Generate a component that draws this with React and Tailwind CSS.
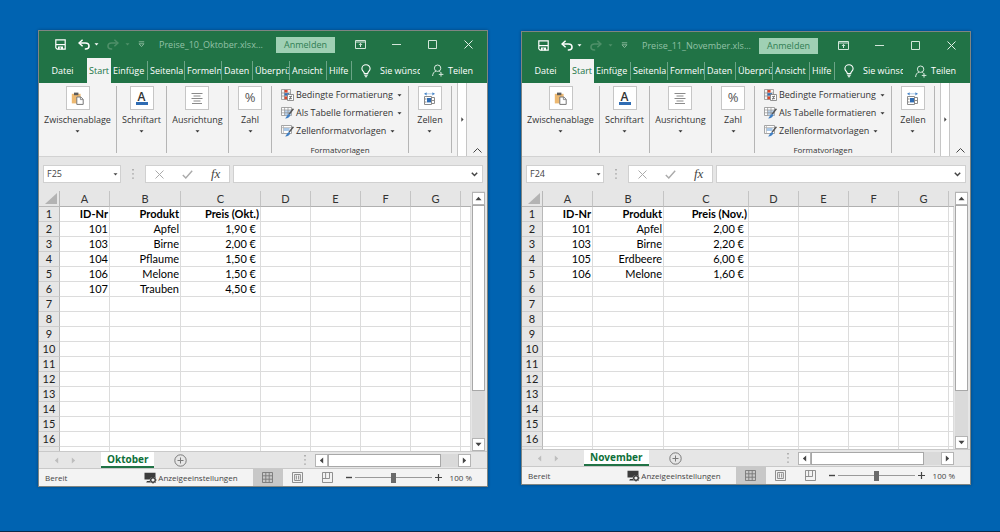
import React from 'react';

const workbooks = [
  {
    file: 'Preise_10_Oktober.xlsx...',
    sheet: 'Oktober',
    cell: 'F25',
    priceHead: 'Preis (Okt.)',
    priceCol: 'w-[80px]',
    peekRow: 'h-1',
    offset: '',
    tabHeight: 'h-[25px]',
    rows: [
      ['101', 'Apfel', '1,90 €'],
      ['103', 'Birne', '2,00 €'],
      ['104', 'Pflaume', '1,50 €'],
      ['106', 'Melone', '1,50 €'],
      ['107', 'Trauben', '4,50 €'],
    ],
  },
  {
    file: 'Preise_11_November.xls...',
    sheet: 'November',
    cell: 'F24',
    priceHead: 'Preis (Nov.)',
    priceCol: 'w-[85px]',
    peekRow: 'h-0.5',
    offset: 'mt-px',
    tabHeight: 'h-6',
    rows: [
      ['101', 'Apfel', '2,00 €'],
      ['103', 'Birne', '2,20 €'],
      ['105', 'Erdbeere', '6,00 €'],
      ['106', 'Melone', '1,60 €'],
    ],
  },
];

// the narrow ribbon only has room for the first letters of some tabs
const tabs = [
  { name: 'Einfügen', short: 'Einfüge', width: 'w-[37px]' },
  { name: 'Seitenlayout', short: 'Seitenla', width: 'w-[37px]' },
  { name: 'Formeln', short: 'Formeln', width: 'w-[37px]' },
  { name: 'Daten', short: 'Daten', width: 'w-[31px]' },
  { name: 'Überprüfen', short: 'Überprü', width: 'w-[37px]' },
  { name: 'Ansicht', short: 'Ansicht', width: 'w-[37px]' },
  { name: 'Hilfe', short: 'Hilfe', width: 'w-[25px]' },
];

const ROW_COUNT = 16;
const letters = ['A', 'B', 'C', 'D', 'E', 'F', 'G'];

/* ---------- Icons ---------- */

const Caret = ({ className = '' }) => (
  <svg className={className} width="5" height="3" viewBox="0 0 5 3">
    <path d="M0.5 0.2h4L2.5 2.6z" fill="currentColor" />
  </svg>
);

const Arrow = ({ turn = '' }) => (
  <svg className={turn} width="7" height="7" viewBox="0 0 7 7">
    <path d="M0.5 5.2h6L3.5 1.8z" fill="currentColor" />
  </svg>
);

const SaveIcon = () => (
  <svg width="11" height="11" viewBox="0 0 11 11" fill="none" stroke="#fff">
    <path d="M0.8 0.8h9.4v9.4H2.2L0.8 8.8z" strokeWidth="1.2" />
    <path d="M1 5.6h9" strokeWidth="1.2" />
    <path d="M3 7.6h5v2.6H6V8.6H4.6v1.6H3z" fill="#fff" stroke="none" />
  </svg>
);

const UndoIcon = ({ className = '' }) => (
  <svg className={className} width="12" height="11" viewBox="0 0 12 11" fill="none" stroke="currentColor">
    <path d="M4.6 0.8L1 4l3.6 3.2" strokeWidth="1.5" />
    <path d="M1.2 4h6.1c2.2 0 3.7 1.1 3.7 3 0 2-1.5 3-3.5 3H6.8" strokeWidth="1.6" />
  </svg>
);

const CustomizeIcon = () => (
  <svg width="7" height="7" viewBox="0 0 7 7" fill="none" stroke="#8dbb9f" strokeWidth="0.9">
    <path d="M0.8 0.8h5.4M1 2.8h5L3.5 5.6z" />
  </svg>
);

const RibbonModeIcon = () => (
  <svg width="11" height="9" viewBox="0 0 11 9" fill="none" stroke="#d3e6da">
    <path d="M0.5 0.5h10v8H0.5zM0.5 2h10" />
    <path d="M5.5 7V3.6M3.9 5l1.6-1.6L7.1 5" />
  </svg>
);

const BulbIcon = () => (
  <svg width="10" height="14" viewBox="0 0 10 14" fill="none" stroke="#fff">
    <path d="M3.3 9.6C3.3 7.8 0.9 7 0.9 4.7a4.1 4 0 0 1 8.2 0c0 2.3-2.4 3.1-2.4 4.9z" strokeWidth="1.1" />
    <path d="M3.3 11.2h3.4M3.9 12.8h2.2" strokeWidth="1.1" />
  </svg>
);

const ShareIcon = () => (
  <svg width="12" height="13" viewBox="0 0 12 13" fill="none" stroke="#d9eae0">
    <circle cx="5.6" cy="4.2" r="3.2" />
    <path d="M0.6 12c0.2-2.7 1.4-4.3 3.4-4.9M7.2 7l1.4 1.4M9 8.2v4.4M6.8 10.4h4.6" />
  </svg>
);

const PasteIcon = () => (
  <svg width="13" height="13" viewBox="0 0 13 13" fill="none">
    <path d="M0.8 1.8h8.8v9.6H0.8z" fill="#edb972" />
    <path d="M3 0.6h4.4v2.6H3z" fill="#5c5c5c" />
    <path d="M5.8 5h4l2.4 2.3v5.1H5.8z" fill="#fff" stroke="#777" />
    <path d="M9.4 5v2.6h2.8" stroke="#777" strokeWidth="0.8" />
  </svg>
);

const AlignIcon = () => (
  <svg width="12" height="13" viewBox="0 0 12 13" stroke="#8a8a8a">
    <path d="M0.5 1.5h11M2.5 4h7M0.5 6.5h11M2.5 9h7M1 11.5h10" />
  </svg>
);

const FontIcon = () => (
  <span className="flex flex-col items-center">
    <span className="text-[12px] leading-[11px] font-semibold text-[#333]">A</span>
    <span className="h-[3px] w-3 bg-[#2f6cb3]" />
  </span>
);

const CellsIcon = () => (
  <svg width="13" height="13" viewBox="0 0 13 13" fill="none">
    <path d="M1 1.8h11" stroke="#9dc0e6" strokeWidth="0.8" />
    <path d="M3.6 0.2v3.2L1.4 1.8zM9.4 0.2v3.2l2.2-1.6z" fill="#3f7fc4" />
    <path d="M1.5 4.5h7v8h-7zM8.5 5.5h3v6h-3z" stroke="#8b8b8b" />
    <path d="M1.5 7h2M1.5 10h2M9 8.5h3" stroke="#8b8b8b" />
    <path d="M4 6h4v4.4H4z" fill="#2f6cb3" />
  </svg>
);

const ConditionalIcon = () => (
  <svg width="13" height="12" viewBox="0 0 13 12" fill="none">
    <path d="M0.5 0.5h9v10h-9zM0.5 4h9M0.5 7h9M3.5 0.5v10" stroke="#8f8f8f" strokeWidth="0.8" />
    <path d="M3.6 1h3v2.6h-3zM3.6 7.4h2.4v2.8H3.6z" fill="#d9472b" />
    <path d="M3.6 4.2h4.4v2.4H3.6z" fill="#2f6cb3" />
    <path d="M6.5 5.5h6v6h-6z" fill="#fff" stroke="#777" strokeWidth="0.8" />
    <path d="M8 9.6h3M8 7.6h3M10.4 6.6l-1.8 4" stroke="#555" strokeWidth="0.7" />
  </svg>
);

const TableStyleIcon = ({ grid }) => (
  <svg width="13" height="12" viewBox="0 0 13 12" fill="none">
    <path d="M0.5 0.5h10v8h-10z" fill="#fff" stroke="#8f8f8f" strokeWidth="0.8" />
    {grid ? (
      <>
        <path d="M3.6 3.2h6.6v5H3.6z" fill="#b9d2ec" />
        <path d="M0.5 3h10M0.5 5.8h10M3.6 0.5v8M7 0.5v8" stroke="#8f8f8f" strokeWidth="0.7" />
      </>
    ) : (
      <>
        <path d="M2.6 3h6v3h-6z" fill="#a9c8e8" />
        <path d="M0.5 2.6h10M2.4 0.5v8" stroke="#a9a9a9" strokeWidth="0.7" />
      </>
    )}
    <path d="M12.4 1.8L8 7.4" stroke="#555" strokeWidth="1.5" />
    <path d="M8 7l1.2 1.2c-0.4 2-2 3.2-5.2 3.2 1.6-1 1.6-3.4 4-4.4z" fill="#3f7fc4" />
  </svg>
);

const DisplayIcon = () => (
  <svg width="13" height="12" viewBox="0 0 13 12">
    <path d="M0.5 0.8h11v4.4L7 5.4 5.4 7.6H0.5zM3 9h3v1.4H2.2z" fill="#3c3c3c" />
    <circle cx="9" cy="8" r="2.3" fill="none" stroke="#3c3c3c" strokeWidth="1.4" />
    <path d="M9 4.6v1M9 10.4v1.2M5.6 8h1M11.4 8h1.2M6.6 5.6l.8.8M10.6 9.6l.9.9M6.6 10.4l.8-.8M10.6 6.4l.9-.9" stroke="#3c3c3c" />
  </svg>
);

const NormalViewIcon = () => (
  <svg width="11" height="11" viewBox="0 0 11 11" fill="none" stroke="#777" strokeWidth="0.9">
    <path d="M0.5 0.5h10v10h-10zM0.5 3.8h10M0.5 7.2h10M3.8 0.5v10M7.2 0.5v10" />
  </svg>
);

const PageViewIcon = () => (
  <svg width="11" height="11" viewBox="0 0 11 11" fill="none" stroke="#858585" strokeWidth="0.9">
    <path d="M0.5 0.5h10v10h-10zM2.6 2.5h5.8v6H2.6z" />
    <path d="M4.4 3.5v4M6.6 3.5v4" />
  </svg>
);

const BreakViewIcon = () => (
  <svg width="11" height="11" viewBox="0 0 11 11" fill="none" stroke="#858585" strokeWidth="0.9">
    <path d="M0.5 0.5h10v10h-10zM0.5 6.5h7M3.6 0.5v6M7.5 0.5v6" />
  </svg>
);

const Dots = () => (
  <svg width="2" height="10" viewBox="0 0 2 10" fill="#999">
    <path d="M0.3 0h1.4v1.4H0.3zM0.3 4.2h1.4v1.4H0.3zM0.3 8.4h1.4v1.4H0.3z" />
  </svg>
);

/* ---------- Title bar and tabs ---------- */

const TitleBar = ({ file }) => (
  <header className="flex h-[27px] items-center bg-[#217346] pl-4 pr-[14px] text-white">
    <button aria-label="Speichern"><SaveIcon /></button>
    <button aria-label="Rückgängig" className="ml-3"><UndoIcon /></button>
    <Caret className="ml-1" />
    <button aria-label="Wiederholen" className="ml-2 text-[#4f9069]"><UndoIcon className="-scale-x-100" /></button>
    <Caret className="ml-1.5 text-[#4f9069]" />
    <button aria-label="Anpassen" className="ml-2"><CustomizeIcon /></button>
    <span className="ml-3.5 min-w-0 flex-1 overflow-hidden text-[9px] whitespace-nowrap text-[#93c2a6]">{file}</span>
    <button className="h-4 w-[59px] bg-[#9fd0b4] text-[9px] leading-4 text-[#2f7d53]">Anmelden</button>
    <button aria-label="Menüband-Anzeigeoptionen" className="ml-5"><RibbonModeIcon /></button>
    <button aria-label="Minimieren" className="ml-[26px]">
      <svg width="9" height="9" viewBox="0 0 9 9" stroke="#d3e6da"><path d="M0 4.5h9" /></svg>
    </button>
    <button aria-label="Maximieren" className="ml-[27px]">
      <svg width="9" height="9" viewBox="0 0 9 9" fill="none" stroke="#d3e6da"><path d="M0.5 0.5h8v8h-8z" /></svg>
    </button>
    <button aria-label="Schließen" className="ml-[27px]">
      <svg width="9" height="9" viewBox="0 0 9 9" stroke="#e3f0e8"><path d="M0.5 0.5l8 8M8.5 0.5l-8 8" /></svg>
    </button>
  </header>
);

const TabBar = ({ height }) => (
  <nav className={`${height} flex items-stretch bg-[#217346] text-[9px] whitespace-nowrap text-white`}>
    <button className="w-12 pr-px">Datei</button>
    <button className="w-6 bg-[#f3f3f3] text-[#217346]">Start</button>
    {tabs.map((tab) => (
      <button
        key={tab.name}
        aria-label={tab.name}
        className={`${tab.width} my-[3px] shrink-0 overflow-hidden border-r border-[#6ba486] px-[2px] text-left`}
      >
        {tab.short}
      </button>
    ))}
    <span className="ml-[9px] flex items-center"><BulbIcon /></span>
    <button aria-label="Sie wünschen" className="ml-[9px] w-10 overflow-hidden text-left">Sie wünsc</button>
    <button className="ml-3 flex items-center gap-1">
      <ShareIcon />
      Teilen
    </button>
  </nav>
);

/* ---------- Ribbon ---------- */

const RibbonGroup = ({ label, width, children }) => (
  <div className={`${width} flex shrink-0 justify-center border-r border-[#b5b5b5]`}>
    <button className="flex flex-col items-center">
      <span className="flex size-6 items-center justify-center border border-[#c6c6c6] bg-white">{children}</span>
      <span className="mt-1 leading-3 whitespace-nowrap">{label}</span>
      <Caret className="mt-1" />
    </button>
  </div>
);

const StyleButton = ({ icon, label }) => (
  <button className="flex h-[18px] shrink-0 items-center whitespace-nowrap">
    {icon}
    <span className="ml-0.5">{label}</span>
    <Caret className="ml-1" />
  </button>
);

const Ribbon = () => (
  <div className="flex h-[74px] border-b border-[#d2d2d2] bg-[#f3f3f3] text-[9px] text-[#333]">
    <div className="flex py-[3px]">
      <RibbonGroup label="Zwischenablage" width="w-[78px]"><PasteIcon /></RibbonGroup>
      <RibbonGroup label="Schriftart" width="w-[50px]"><FontIcon /></RibbonGroup>
      <RibbonGroup label="Ausrichtung" width="w-[62px]"><AlignIcon /></RibbonGroup>
      <RibbonGroup label="Zahl" width="w-[43px]"><span className="text-[13px] text-[#555]">%</span></RibbonGroup>
      <div className="flex w-[137px] shrink-0 flex-col items-start border-r border-[#b5b5b5] px-[9px]">
        <StyleButton icon={<ConditionalIcon />} label="Bedingte Formatierung" />
        <StyleButton icon={<TableStyleIcon grid />} label="Als Tabelle formatieren" />
        <StyleButton icon={<TableStyleIcon />} label="Zellenformatvorlagen" />
        <span className="mt-1 self-center text-[8px] leading-3">Formatvorlagen</span>
      </div>
      <RibbonGroup label="Zellen" width="w-[43px]"><CellsIcon /></RibbonGroup>
    </div>
    <button aria-label="Weitere Gruppen" className="ml-[5px] flex w-[10px] items-center justify-center border-x border-[#c6c6c6] bg-white">
      <svg width="3" height="5" viewBox="0 0 3 5"><path d="M0.3 0.3v4.4L2.6 2.5z" fill="#444" /></svg>
    </button>
    <button aria-label="Menüband reduzieren" className="flex flex-1 items-end justify-center pb-[3px]">
      <svg width="9" height="5" viewBox="0 0 9 5" fill="none" stroke="#444"><path d="M0.5 4.5l4-4 4 4" /></svg>
    </button>
  </div>
);

/* ---------- Formula bar ---------- */

const FormulaBar = ({ cell }) => (
  <div className="flex h-[34px] items-center bg-[#e6e6e6] px-1">
    <div className="flex h-[18px] w-[78px] items-center border border-[#d0d0d0] bg-white pr-0.5 text-[#444]">
      <input aria-label="Namenfeld" defaultValue={cell} className="min-w-0 flex-1 bg-transparent pl-[3px] text-[9px]" />
      <button aria-label="Namenliste"><Caret /></button>
    </div>
    <span className="ml-[11px]"><Dots /></span>
    <div className="ml-[11px] flex h-[18px] w-[85px] items-center border border-[#d0d0d0] bg-white">
      <button aria-label="Abbrechen" className="ml-[9px]">
        <svg width="9" height="9" viewBox="0 0 9 9" stroke="#aaa"><path d="M0.5 0.5l8 8M8.5 0.5l-8 8" /></svg>
      </button>
      <button aria-label="Eingeben" className="ml-[18px]">
        <svg width="11" height="9" viewBox="0 0 11 9" fill="none" stroke="#aaa" strokeWidth="1.4"><path d="M0.8 5l3 3L10.2 0.8" /></svg>
      </button>
      <button className="ml-[18px] font-['Liberation_Serif',serif] text-[13px] leading-4 text-[#444] italic">fx</button>
    </div>
    <div className="ml-[3px] flex h-[18px] min-w-0 flex-1 items-center border border-[#d0d0d0] bg-white pr-1">
      <input aria-label="Bearbeitungsleiste" className="min-w-0 flex-1 bg-transparent text-[9px]" />
      <button aria-label="Bearbeitungsleiste erweitern">
        <svg width="7" height="5" viewBox="0 0 7 5" fill="none" stroke="#444" strokeWidth="1.5"><path d="M0.8 0.8l2.7 2.7 2.7-2.7" /></svg>
      </button>
    </div>
  </div>
);

/* ---------- Sheet ---------- */

const Sheet = ({ book }) => {
  const { rows, priceHead, priceCol, peekRow } = book;
  const table = [['ID-Nr', 'Produkt', priceHead], ...rows];
  const grid = 'border-r border-b border-[#dcdcdc] p-0';

  return (
    <div className="flex bg-[#e6e6e6]">
      <table className="min-w-0 flex-1 table-fixed border-separate border-spacing-0 bg-white font-[Lato,sans-serif] text-[11px] leading-[14px] text-black">
        <colgroup>
          <col className="w-[21px]" />
          <col className="w-[50px]" />
          <col className="w-[71px]" />
          <col className={priceCol} />
          <col className="w-[50px]" />
          <col className="w-[50px]" />
          <col className="w-[50px]" />
          <col className="w-[50px]" />
          <col />
        </colgroup>
        <thead>
          <tr className="h-4 bg-[#e6e6e6] text-[#333]">
            <th className="border-r border-b border-[#b8b8b8] p-0">
              <svg className="ml-1.5" width="12" height="11" viewBox="0 0 12 11"><path d="M12 0v11H0z" fill="#b3b3b3" /></svg>
            </th>
            {letters.map((letter) => (
              <th key={letter} className="border-r border-b border-r-[#c4c4c4] border-b-[#b0b0b0] p-0 font-normal">{letter}</th>
            ))}
            <th className="border-b border-[#b0b0b0] p-0" />
          </tr>
        </thead>
        <tbody>
          {Array.from({ length: ROW_COUNT }, (_, r) => (
            <tr key={r} className="h-[15px]">
              <th className="border-r border-b border-r-[#b8b8b8] border-b-[#cdcdcd] bg-[#e6e6e6] p-0 font-normal text-[#222]">{r + 1}</th>
              {letters.map((letter, c) => (
                <td
                  key={letter}
                  className={`${grid} text-right whitespace-nowrap ${r === 0 ? 'font-bold' : ''} ${c === 2 && r > 0 ? 'pr-1' : 'pr-px'}`}
                >
                  {table[r]?.[c]}
                </td>
              ))}
              <td className={grid} />
            </tr>
          ))}
          <tr className={peekRow}>
            <th className="border-r border-[#b8b8b8] bg-[#e6e6e6] p-0" />
            {letters.map((letter) => (
              <td key={letter} className="border-r border-[#dcdcdc] p-0" />
            ))}
            <td className="border-r border-[#dcdcdc] p-0" />
          </tr>
        </tbody>
      </table>

      {/* vertical scroll bar */}
      <div className="ml-px mr-0.5 flex w-[13px] flex-col bg-[#dadada] text-[#444]">
        <button aria-label="Nach oben" className="mt-px flex h-[13px] items-center justify-center border border-[#b4b4b4] bg-white"><Arrow /></button>
        <div className="h-[186px] border border-[#a8a8a8] bg-white" />
        <div className="flex-1" />
        <button aria-label="Nach unten" className="flex h-[13px] items-center justify-center border border-[#b4b4b4] bg-white"><Arrow turn="rotate-180" /></button>
      </div>
    </div>
  );
};

const SheetTabs = ({ sheet }) => (
  <div className="flex h-[18px] border-y border-[#c9c9c9] bg-[#e6e6e6] pr-4 text-[#444]">
    <div className="flex w-[62px] items-center gap-[10px] pl-[14px] text-[#bdbdbd]">
      <button aria-label="Vorheriges Blatt"><Arrow turn="-rotate-90" /></button>
      <button aria-label="Nächstes Blatt"><Arrow turn="rotate-90" /></button>
    </div>
    <button className="border-b-2 border-[#217346] bg-white px-1.5 text-[10px] leading-[14px] font-bold text-[#0e7039]">{sheet}</button>
    <button aria-label="Neues Blatt" className="ml-5">
      <svg width="13" height="13" viewBox="0 0 13 13" fill="none" stroke="#7a7a7a">
        <circle cx="6.5" cy="6.5" r="5.7" />
        <path d="M6.5 3.5v6M3.5 6.5h6" />
      </svg>
    </button>
    <div className="ml-auto flex items-center">
      <Dots />
      <button aria-label="Nach links" className="ml-[9px] flex size-[13px] items-center justify-center border border-[#b4b4b4] bg-white"><Arrow turn="-rotate-90" /></button>
      <div className="flex h-[13px] w-[130px] bg-[#dadada]">
        <div className="w-[113px] border border-[#a8a8a8] bg-white" />
      </div>
      <button aria-label="Nach rechts" className="flex size-[13px] items-center justify-center border border-[#b4b4b4] bg-white"><Arrow turn="rotate-90" /></button>
    </div>
  </div>
);

const StatusBar = () => (
  <footer className="flex h-[17px] items-center bg-[#f3f3f3] pr-[15px] pl-1.5 text-[8px] whitespace-nowrap text-[#444]">
    <span>Bereit</span>
    <button className="mr-[15px] ml-auto flex items-center gap-px">
      <DisplayIcon />
      Anzeigeeinstellungen
    </button>
    <button aria-label="Normal" className="flex h-full w-[30px] items-center justify-center bg-[#c8c8c8]"><NormalViewIcon /></button>
    <button aria-label="Seitenlayout" className="flex h-full w-[30px] items-center justify-center"><PageViewIcon /></button>
    <button aria-label="Umbruchvorschau" className="flex h-full w-[30px] items-center justify-center"><BreakViewIcon /></button>
    <button aria-label="Verkleinern" className="ml-[3px]">
      <svg width="6" height="7" viewBox="0 0 6 7" stroke="#444" strokeWidth="1.4"><path d="M0 3.5h6" /></svg>
    </button>
    <input
      type="range"
      aria-label="Zoom"
      min="10"
      max="190"
      defaultValue="100"
      className="mx-[3px] h-[11px] w-[77px] appearance-none bg-[linear-gradient(#9a9a9a,#9a9a9a)] bg-[length:100%_1px] bg-center bg-no-repeat [&::-webkit-slider-thumb]:h-[10px] [&::-webkit-slider-thumb]:w-[5px] [&::-webkit-slider-thumb]:appearance-none [&::-webkit-slider-thumb]:bg-[#6a6a6a]"
    />
    <button aria-label="Vergrößern">
      <svg width="7" height="7" viewBox="0 0 7 7" stroke="#444" strokeWidth="1.2"><path d="M0 3.5h7M3.5 0v7" /></svg>
    </button>
    <span className="ml-2">100 %</span>
  </footer>
);

const ExcelWindow = ({ book }) => (
  <section className={`${book.offset} min-w-0 overflow-hidden border border-[#7f8582] shadow-[0_0_3px_rgba(0,0,0,0.3)]`}>
    <TitleBar file={book.file} />
    <TabBar height={book.tabHeight} />
    <Ribbon />
    <FormulaBar cell={book.cell} />
    <Sheet book={book} />
    <SheetTabs sheet={book.sheet} />
    <StatusBar />
  </section>
);

const App = () => {
  return (
    <main className="grid min-h-screen grid-cols-2 items-start gap-x-[33px] border-b border-[#0a2a4a] bg-[#0063b1] pt-[30px] pr-[29px] pb-11 pl-[38px] font-['Open_Sans','Noto_Sans',sans-serif]">
      {workbooks.map((book) => (
        <ExcelWindow key={book.sheet} book={book} />
      ))}
    </main>
  );
};

export default App;
